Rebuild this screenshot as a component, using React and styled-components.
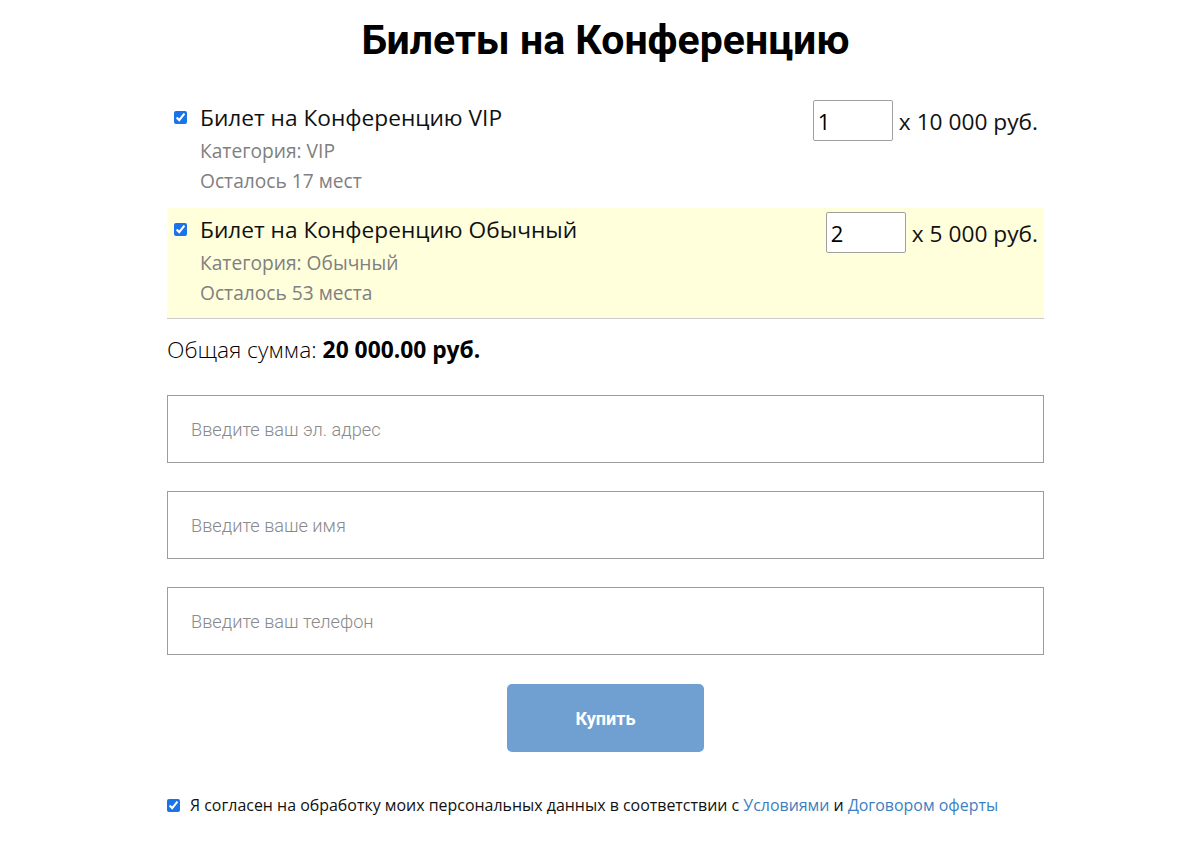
import React, { useState } from 'react'
import styled, { createGlobalStyle } from 'styled-components'

const GlobalStyle = createGlobalStyle`
  body {
    margin: 0;
    background: #fff;
    font-family: "Open Sans", "Liberation Sans", sans-serif;
    color: #111;
  }
`

const tickets = [
  { id: 1, title: 'Билет на Конференцию VIP', category: 'VIP', left: 'Осталось 17 мест', price: '10 000', qty: 1, highlight: false },
  { id: 2, title: 'Билет на Конференцию Обычный', category: 'Обычный', left: 'Осталось 53 места', price: '5 000', qty: 2, highlight: true },
]

function TicketRow({ ticket }) {
  const [qty, setQty] = useState(ticket.qty)
  return (
    <Row highlight={ticket.highlight}>
      <RowCheck type="checkbox" defaultChecked />
      <RowInfo>
        <RowTitle>{ticket.title}</RowTitle>
        <RowMeta>Категория: {ticket.category}</RowMeta>
        <RowMeta>{ticket.left}</RowMeta>
      </RowInfo>
      <RowPrice>
        <Qty value={qty} onChange={e => setQty(e.target.value)} />
        <PriceText>x {ticket.price} руб.</PriceText>
      </RowPrice>
    </Row>
  )
}

export default function App() {
  return (
    <>
      <GlobalStyle />
      <Page>
        <Title>Билеты на Конференцию</Title>
        <List>
          {tickets.map(t => <TicketRow key={t.id} ticket={t} />)}
        </List>
        <Total>Общая сумма: <b>20 000.00 руб.</b></Total>
        <Form>
          <Field placeholder="Введите ваш эл. адрес" />
          <Field placeholder="Введите ваше имя" />
          <Field placeholder="Введите ваш телефон" />
          <BuyButton type="button">Купить</BuyButton>
        </Form>
        <Agree>
          <AgreeCheck type="checkbox" defaultChecked />
          <span>
            Я согласен на обработку моих персональных данных в соответствии с{' '}
            <Link href="#">Условиями</Link> и <Link href="#">Договором оферты</Link>
          </span>
        </Agree>
      </Page>
    </>
  )
}

const Page = styled.div`
  width: 877px;
  margin: 0 auto;
  padding-left: 11px;
  padding-bottom: 20px;
`

const Title = styled.h1`
  margin: 0;
  padding-top: 14px;
  height: 66px;
  text-align: center;
  font-family: Roboto, "Liberation Sans", sans-serif;
  font-weight: 700;
  font-size: 41px;
  line-height: 52px;
  color: #000;
`

const List = styled.div`
  display: flex;
  flex-direction: column;
  gap: 2px;
  margin-top: 16px;
  border-bottom: 1px solid #cccccc;
`

const Row = styled.div`
  display: flex;
  align-items: flex-start;
  height: 110px;
  box-sizing: border-box;
  padding: 4px 6px 10px 7px;
  background: ${props => (props.highlight ? '#ffffdc' : 'transparent')};
`

const RowCheck = styled.input`
  width: 13px;
  height: 13px;
  margin: 11px 13px 0 0;
  accent-color: #1a73e8;
`

const RowInfo = styled.div`
  flex: 1;
  display: flex;
  flex-direction: column;
`

const RowTitle = styled.div`
  font-size: 22.7px;
  line-height: 36px;
  color: #111;
`

const RowMeta = styled.div`
  font-size: 19.2px;
  line-height: 30px;
  color: #808080;
`

const RowPrice = styled.div`
  display: flex;
  align-items: center;
  gap: 6px;
`

const Qty = styled.input`
  width: 80px;
  height: 41px;
  box-sizing: border-box;
  border: 1px solid #a0a0a0;
  border-radius: 2px;
  padding: 0 4px;
  font-family: "Open Sans", "Liberation Sans", sans-serif;
  font-size: 22px;
  color: #000;
  outline: none;
`

const PriceText = styled.span`
  font-size: 22.7px;
  line-height: 36px;
  margin-top: 2px;
  color: #111;
`

const Total = styled.div`
  margin-top: 16px;
  font-family: "Open Sans Light", "Open Sans", "Liberation Sans", sans-serif;
  font-size: 22.8px;
  line-height: 30px;
  font-weight: 300;
  color: #000;

  b {
    font-family: "Open Sans", "Liberation Sans", sans-serif;
    font-weight: 700;
  }
`

const Form = styled.div`
  display: flex;
  flex-direction: column;
  gap: 28px;
  margin-top: 30px;
`

const Field = styled.input`
  height: 68px;
  box-sizing: border-box;
  border: 1px solid #9c9c9c;
  padding: 0 23px;
  font-family: Roboto, "Liberation Sans", sans-serif;
  font-weight: 300;
  font-size: 18.2px;
  color: #333;
  outline: none;

  &::placeholder {
    color: #8a8a8a;
  }
`

const BuyButton = styled.button`
  align-self: center;
  width: 197px;
  height: 68px;
  margin-top: 1px;
  border: none;
  border-radius: 5px;
  background: #70a0d2;
  color: #fff;
  font-family: Roboto, "Liberation Sans", sans-serif;
  font-weight: 700;
  font-size: 18px;
  cursor: pointer;
`

const Agree = styled.label`
  display: flex;
  align-items: center;
  gap: 10px;
  margin-top: 41px;
  font-size: 15.95px;
  line-height: 24px;
  color: #111;
`

const AgreeCheck = styled.input`
  width: 13px;
  height: 13px;
  margin: 0;
  accent-color: #1a73e8;
`

const Link = styled.a`
  color: #3c7fc0;
  text-decoration: none;
`
